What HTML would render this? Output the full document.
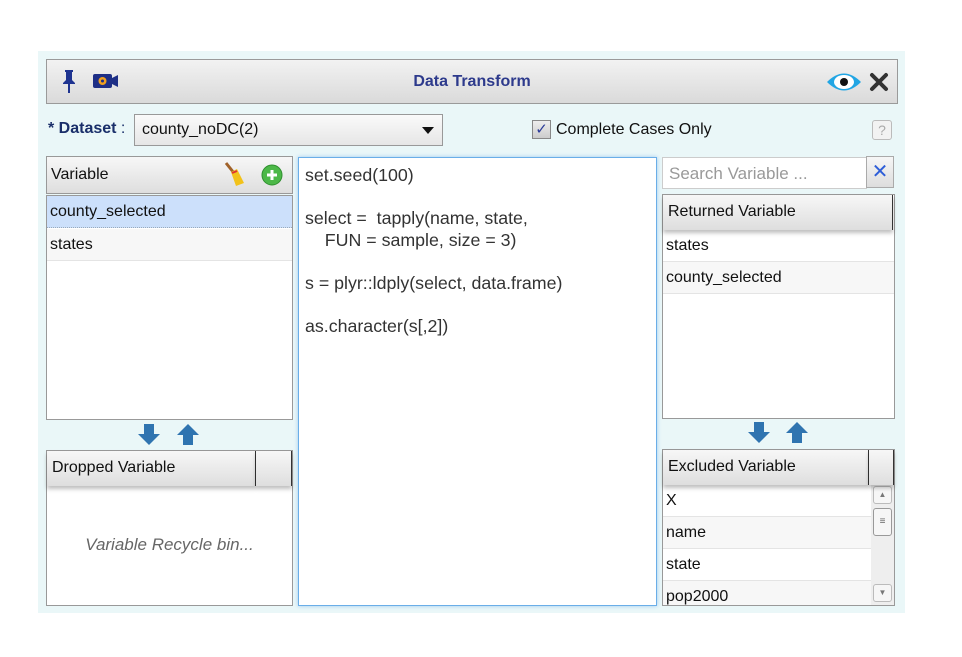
<!DOCTYPE html>
<html><head><meta charset="utf-8"><style>
*{box-sizing:border-box;margin:0;padding:0}
body{width:962px;height:657px;background:#fff;font-family:"Liberation Sans",Arial,sans-serif;font-size:16px;color:#111;position:relative;overflow:hidden}
.a{position:absolute}
.bg{left:38px;top:51px;width:867px;height:562px;background:#eaf7f8}
.title{left:46px;top:59px;width:852px;height:45px;border:1px solid #9a9a9a;background:linear-gradient(#f2f2f2,#dadada)}
.hdr{background:linear-gradient(#f7f7f7,#dedede);border:1px solid #999;box-shadow:0 3px 4px rgba(0,0,0,.25)}
.box{background:#fff;border:1px solid #999}
.row{position:absolute;left:0;right:0;height:32px;line-height:32px;padding-left:3px;border-bottom:1px solid #e4e4e4;font-size:16px}
</style></head><body>
<div class="a bg"></div>
<div class="a title">
  <svg class="a" style="left:14px;top:8px" width="16" height="26" viewBox="0 0 16 26"><path d="M4 2h8v2h-1v8l3 3v1H2v-1l3-3V4H4z" fill="#1e3390"/><rect x="7" y="16" width="2" height="9" fill="#1e3390"/></svg>
  <svg class="a" style="left:46px;top:12px" width="26" height="18" viewBox="0 0 26 18"><rect x="0" y="2" width="19" height="14" rx="2" fill="#1e2f86"/><path d="M19 6l6-3v12l-6-3z" fill="#1e2f86"/><circle cx="9.5" cy="9" r="4" fill="#f0a020"/><circle cx="9.5" cy="9" r="1.5" fill="#1e2f86"/></svg>
  <div class="a" style="left:0;width:850px;top:13px;text-align:center;font-weight:bold;color:#2d3a8c;font-size:16px">Data Transform</div>
  <svg class="a" style="left:779px;top:11px" width="36" height="22" viewBox="0 0 36 22"><path d="M1 11Q18 -6 35 11Q18 28 1 11z" fill="#22a6e4"/><ellipse cx="18" cy="11" rx="10" ry="7" fill="#fff"/><circle cx="18" cy="11" r="4" fill="#111"/></svg>
  <svg class="a" style="left:822px;top:12px" width="20" height="20" viewBox="0 0 20 20"><path d="M3 3L17 17M17 3L3 17" stroke="#333" stroke-width="4" stroke-linecap="round"/></svg>
</div>
<div class="a" style="left:48px;top:120px;font-weight:bold;color:#1a2f6a">* Dataset <span style="font-weight:normal">:</span></div>
<div class="a" style="left:134px;top:114px;width:309px;height:32px;border:1px solid #999;background:linear-gradient(#fafafa,#e6e6e6);padding:6px 7px">county_noDC(2)<span class="a" style="right:8px;top:12px;border-left:6px solid transparent;border-right:6px solid transparent;border-top:7px solid #111"></span></div>
<div class="a" style="left:532px;top:120px;width:19px;height:19px;border:1px solid #888;background:linear-gradient(#eee,#ccc);color:#2c3c9a;font-size:15px;text-align:center;line-height:17px">✓</div>
<div class="a" style="left:556px;top:121px">Complete Cases Only</div>
<div class="a" style="left:872px;top:120px;width:20px;height:20px;border:1px solid #bbb;border-radius:3px;background:#f2f2f2;color:#aaa;font-size:14px;text-align:center;line-height:18px">?</div>

<div class="a hdr" style="left:46px;top:156px;width:247px;height:38px;box-shadow:none;padding:9px 4px">Variable</div>
<svg class="a" style="left:222px;top:161px" width="24" height="26" viewBox="0 0 24 26"><path d="M4 2l8 10" stroke="#a0622a" stroke-width="3"/><path d="M9 11l6-3 7 14-8 3z" fill="#f2c21a"/><path d="M10 12l5-2" stroke="#d33" stroke-width="2"/></svg>
<svg class="a" style="left:261px;top:164px" width="22" height="22"><circle cx="11" cy="11" r="10" fill="#4cb848" stroke="#2f8f2f"/><path d="M11 6v10M6 11h10" stroke="#fff" stroke-width="3"/></svg>
<div class="a box" style="left:46px;top:195px;width:247px;height:225px">
  <div class="row" style="top:0;background:#cce0fb;border-bottom:1px dotted #9ab">county_selected</div>
  <div class="row" style="top:33px;background:#f7f7f7">states</div>
</div>
<svg class="a" style="left:137px;top:423px" width="24" height="23"><path d="M7 1h10v10h6L12 22 1 11h6z" fill="#2f74b0"/></svg>
<svg class="a" style="left:176px;top:423px" width="24" height="23"><path d="M12 1l11 11h-6v10H7V12H1z" fill="#2f74b0"/></svg>
<div class="a box" style="left:46px;top:450px;width:247px;height:156px"></div>
<div class="a hdr" style="left:47px;top:451px;width:209px;height:35px;border:none;border-right:1px solid #333;padding:8px 5px">Dropped Variable</div>
<div class="a hdr" style="left:256px;top:451px;width:36px;height:35px;border:none;border-right:1px solid #333"></div>
<div class="a" style="left:47px;top:535px;width:245px;text-align:center;font-style:italic;color:#666;font-size:17px">Variable Recycle bin...</div>

<div class="a" style="left:298px;top:157px;width:359px;height:449px;background:#fff;border:1px solid #6aaee8;box-shadow:0 0 4px #9cc8f0;padding:7px 6px;line-height:21.6px;color:#333;white-space:pre;font-size:17.8px">set.seed(100)

select =  tapply(name, state,
    FUN = sample, size = 3)

s = plyr::ldply(select, data.frame)

as.character(s[,2])</div>

<div class="a" style="left:662px;top:157px;width:205px;height:32px;background:#fff;border:1px solid #ccc;padding:6px 6px;color:#999;font-size:17px">Search Variable ...</div>
<div class="a" style="left:866px;top:156px;width:28px;height:32px;border:1px solid #aaa;background:linear-gradient(#f6f6f6,#ddd);color:#2e5ed8;text-align:center;font-size:20px;line-height:30px">✕</div>
<div class="a box" style="left:662px;top:194px;width:233px;height:225px">
  <div class="row" style="top:35px">states</div>
  <div class="row" style="top:67px;background:#f7f7f7">county_selected</div>
</div>
<div class="a hdr" style="left:663px;top:195px;width:230px;height:35px;border:none;border-right:1px solid #333;padding:8px 5px">Returned Variable</div>
<svg class="a" style="left:747px;top:421px" width="24" height="23"><path d="M7 1h10v10h6L12 22 1 11h6z" fill="#2f74b0"/></svg>
<svg class="a" style="left:785px;top:421px" width="24" height="23"><path d="M12 1l11 11h-6v10H7V12H1z" fill="#2f74b0"/></svg>
<div class="a box" style="left:662px;top:449px;width:233px;height:157px;overflow:hidden">
  <div class="row" style="top:35px;right:23px">X</div>
  <div class="row" style="top:67px;right:23px;background:#f7f7f7">name</div>
  <div class="row" style="top:99px;right:23px">state</div>
  <div class="row" style="top:131px;right:23px;background:#f7f7f7">pop2000</div>
  <div class="a" style="right:0;top:35px;width:23px;height:121px;background:#eee"></div>
  <div class="a" style="right:2px;top:36px;width:19px;height:18px;border:1px solid #bbb;border-radius:3px;background:#f6f6f6;font-size:8px;color:#777;text-align:center;line-height:16px">▲</div>
  <div class="a" style="right:2px;top:58px;width:19px;height:28px;border:1px solid #999;border-radius:3px;background:#f6f6f6;font-size:10px;color:#666;text-align:center;line-height:26px">≡</div>
  <div class="a" style="right:2px;top:134px;width:19px;height:18px;border:1px solid #bbb;border-radius:3px;background:#f6f6f6;font-size:8px;color:#777;text-align:center;line-height:16px">▼</div>
</div>
<div class="a hdr" style="left:663px;top:450px;width:206px;height:35px;border:none;border-right:1px solid #333;padding:8px 5px">Excluded Variable</div>
<div class="a hdr" style="left:869px;top:450px;width:25px;height:35px;border:none;border-right:1px solid #333"></div>
</body></html>
